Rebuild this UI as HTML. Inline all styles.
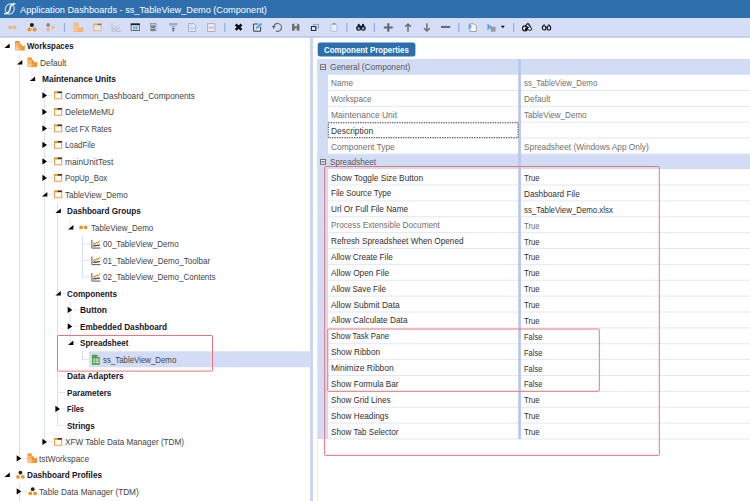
<!DOCTYPE html>
<html lang="en"><head><meta charset="utf-8"><title>Application Dashboards</title>
<style>
html,body{margin:0;padding:0}
body{width:750px;height:501px;overflow:hidden;background:#fff;position:relative;font-family:"Liberation Sans",sans-serif}
#a{position:absolute;left:0;top:0;width:750px;height:501px;overflow:hidden}
#a>div,#a>svg,#a>span{position:absolute;display:block}
#a>span{white-space:pre;line-height:12px;height:12px;transform-origin:0 50%}
</style></head>
<body><div id="a">
<svg id="g" width="750" height="501" viewBox="0 0 750 501">
<defs><linearGradient id="fg" x1="0" y1="0" x2="0" y2="1"><stop offset="0" stop-color="#f5861a"/><stop offset="0.35" stop-color="#f6983a"/><stop offset="1" stop-color="#f9b878"/></linearGradient></defs>
<rect x="0.00" y="0.00" width="750.00" height="18.00" fill="#2f6fad"/>
<rect x="0.00" y="18.00" width="750.00" height="19.00" fill="#d5def6"/>
<rect x="0.00" y="36.20" width="750.00" height="1.50" fill="#b7c4e5"/>
<rect x="310.20" y="37.70" width="2.70" height="464.00" fill="#c8d2f0"/>
<rect x="89.20" y="351.30" width="221.10" height="16.00" fill="#d3dcf5"/>
<rect x="19.00" y="54.40" width="1.00" height="405.00" fill="#dbe0f3"/>
<rect x="19.00" y="483.40" width="1.00" height="17.60" fill="#dbe0f3"/>
<rect x="31.50" y="70.90" width="1.00" height="6.00" fill="#dbe0f3"/>
<rect x="44.10" y="87.40" width="1.00" height="355.50" fill="#dbe0f3"/>
<rect x="57.00" y="202.90" width="1.00" height="223.50" fill="#dbe0f3"/>
<rect x="69.70" y="219.40" width="1.00" height="6.00" fill="#dbe0f3"/>
<rect x="82.00" y="235.90" width="1.00" height="42.00" fill="#dbe0f3"/>
<rect x="69.70" y="301.90" width="1.00" height="42.00" fill="#dbe0f3"/>
<rect x="82.00" y="351.40" width="1.00" height="9.00" fill="#dbe0f3"/>
<rect x="47.50" y="94.90" width="5.50" height="1.00" fill="#e1e5f5"/>
<rect x="47.50" y="111.40" width="5.50" height="1.00" fill="#e1e5f5"/>
<rect x="47.50" y="127.90" width="5.50" height="1.00" fill="#e1e5f5"/>
<rect x="47.50" y="144.40" width="5.50" height="1.00" fill="#e1e5f5"/>
<rect x="47.50" y="160.90" width="5.50" height="1.00" fill="#e1e5f5"/>
<rect x="47.50" y="177.40" width="5.50" height="1.00" fill="#e1e5f5"/>
<rect x="47.50" y="193.90" width="5.50" height="1.00" fill="#e1e5f5"/>
<rect x="47.50" y="441.40" width="5.50" height="1.00" fill="#e1e5f5"/>
<rect x="82.50" y="243.40" width="8.50" height="1.00" fill="#e1e5f5"/>
<rect x="82.50" y="259.90" width="8.50" height="1.00" fill="#e1e5f5"/>
<rect x="82.50" y="276.40" width="8.50" height="1.00" fill="#e1e5f5"/>
<rect x="82.50" y="358.90" width="8.50" height="1.00" fill="#e1e5f5"/>
<rect x="57.50" y="375.40" width="7.50" height="1.00" fill="#e1e5f5"/>
<rect x="57.50" y="391.90" width="7.50" height="1.00" fill="#e1e5f5"/>
<rect x="57.50" y="424.90" width="7.50" height="1.00" fill="#e1e5f5"/>
<rect x="61.00" y="408.40" width="4.00" height="1.00" fill="#e1e5f5"/>
<rect x="62.00" y="210.40" width="3.00" height="1.00" fill="#e1e5f5"/>
<rect x="62.00" y="292.90" width="3.00" height="1.00" fill="#e1e5f5"/>
<rect x="74.00" y="309.40" width="4.00" height="1.00" fill="#e1e5f5"/>
<rect x="74.00" y="325.90" width="4.00" height="1.00" fill="#e1e5f5"/>
<rect x="74.00" y="342.40" width="4.00" height="1.00" fill="#e1e5f5"/>
<rect x="22.00" y="457.90" width="5.00" height="1.00" fill="#e1e5f5"/>
<rect x="22.00" y="490.90" width="5.00" height="1.00" fill="#e1e5f5"/>
<svg x="4.30" y="43.50" overflow="visible" width="5.4" height="4.4" viewBox="0 0 5.4 4.4"><path d="M5.4 0V4.4H0Z" fill="#000"/></svg>
<svg x="14.90" y="40.80" overflow="visible" width="10" height="10" viewBox="0 0 10 10"><path d="M0.2 0.2H4.5V9.8H0.2Z" fill="url(#fg)"/><path d="M4.5 2L6.5 3.8L7.8 5.6L9.8 3.9V9.8H4.5Z" fill="#f6912a"/><path d="M1 2.4H3.4V3.4H1ZM1 4.4H3.4V5.4H1ZM1 6.4H3.4V8.8H1Z" fill="#fbd3a8"/><path d="M5.4 6.4H6.4V9H5.4Z" fill="#f9b878"/></svg>
<svg x="16.90" y="60.00" overflow="visible" width="5.4" height="4.4" viewBox="0 0 5.4 4.4"><path d="M5.4 0V4.4H0Z" fill="#000"/></svg>
<svg x="27.30" y="57.30" overflow="visible" width="10" height="10" viewBox="0 0 10 10"><path d="M0.2 0.2H4.5V9.8H0.2Z" fill="url(#fg)"/><path d="M4.5 2L6.5 3.8L7.8 5.6L9.8 3.9V9.8H4.5Z" fill="#f6912a"/><path d="M1 2.4H3.4V3.4H1ZM1 4.4H3.4V5.4H1ZM1 6.4H3.4V8.8H1Z" fill="#fbd3a8"/><path d="M5.4 6.4H6.4V9H5.4Z" fill="#f9b878"/></svg>
<svg x="29.70" y="76.50" overflow="visible" width="5.4" height="4.4" viewBox="0 0 5.4 4.4"><path d="M5.4 0V4.4H0Z" fill="#000"/></svg>
<svg x="42.40" y="92.30" overflow="visible" width="4.6" height="6.2" viewBox="0 0 4.6 6.2"><path d="M0 0L4.6 3.1L0 6.2Z" fill="#000"/></svg>
<svg x="54.00" y="91.40" overflow="visible" width="8.2" height="8" viewBox="0 0 8.2 8"><rect x="0.5" y="0.6" width="7.2" height="6.8" fill="#fff" stroke="#f29d45" stroke-width="1"/><rect x="0.2" y="0.2" width="7.8" height="1.7" fill="#ee9232"/><rect x="3.6" y="0.2" width="4.4" height="1.5" fill="#333"/></svg>
<svg x="42.40" y="108.80" overflow="visible" width="4.6" height="6.2" viewBox="0 0 4.6 6.2"><path d="M0 0L4.6 3.1L0 6.2Z" fill="#000"/></svg>
<svg x="54.00" y="107.90" overflow="visible" width="8.2" height="8" viewBox="0 0 8.2 8"><rect x="0.5" y="0.6" width="7.2" height="6.8" fill="#fff" stroke="#f29d45" stroke-width="1"/><rect x="0.2" y="0.2" width="7.8" height="1.7" fill="#ee9232"/><rect x="3.6" y="0.2" width="4.4" height="1.5" fill="#333"/></svg>
<svg x="42.40" y="125.30" overflow="visible" width="4.6" height="6.2" viewBox="0 0 4.6 6.2"><path d="M0 0L4.6 3.1L0 6.2Z" fill="#000"/></svg>
<svg x="54.00" y="124.40" overflow="visible" width="8.2" height="8" viewBox="0 0 8.2 8"><rect x="0.5" y="0.6" width="7.2" height="6.8" fill="#fff" stroke="#f29d45" stroke-width="1"/><rect x="0.2" y="0.2" width="7.8" height="1.7" fill="#ee9232"/><rect x="3.6" y="0.2" width="4.4" height="1.5" fill="#333"/></svg>
<svg x="42.40" y="141.80" overflow="visible" width="4.6" height="6.2" viewBox="0 0 4.6 6.2"><path d="M0 0L4.6 3.1L0 6.2Z" fill="#000"/></svg>
<svg x="54.00" y="140.90" overflow="visible" width="8.2" height="8" viewBox="0 0 8.2 8"><rect x="0.5" y="0.6" width="7.2" height="6.8" fill="#fff" stroke="#f29d45" stroke-width="1"/><rect x="0.2" y="0.2" width="7.8" height="1.7" fill="#ee9232"/><rect x="3.6" y="0.2" width="4.4" height="1.5" fill="#333"/></svg>
<svg x="42.40" y="158.30" overflow="visible" width="4.6" height="6.2" viewBox="0 0 4.6 6.2"><path d="M0 0L4.6 3.1L0 6.2Z" fill="#000"/></svg>
<svg x="54.00" y="157.40" overflow="visible" width="8.2" height="8" viewBox="0 0 8.2 8"><rect x="0.5" y="0.6" width="7.2" height="6.8" fill="#fff" stroke="#f29d45" stroke-width="1"/><rect x="0.2" y="0.2" width="7.8" height="1.7" fill="#ee9232"/><rect x="3.6" y="0.2" width="4.4" height="1.5" fill="#333"/></svg>
<svg x="42.40" y="174.80" overflow="visible" width="4.6" height="6.2" viewBox="0 0 4.6 6.2"><path d="M0 0L4.6 3.1L0 6.2Z" fill="#000"/></svg>
<svg x="54.00" y="173.90" overflow="visible" width="8.2" height="8" viewBox="0 0 8.2 8"><rect x="0.5" y="0.6" width="7.2" height="6.8" fill="#fff" stroke="#f29d45" stroke-width="1"/><rect x="0.2" y="0.2" width="7.8" height="1.7" fill="#ee9232"/><rect x="3.6" y="0.2" width="4.4" height="1.5" fill="#333"/></svg>
<svg x="41.90" y="192.00" overflow="visible" width="5.4" height="4.4" viewBox="0 0 5.4 4.4"><path d="M5.4 0V4.4H0Z" fill="#000"/></svg>
<svg x="54.00" y="190.40" overflow="visible" width="8.2" height="8" viewBox="0 0 8.2 8"><rect x="0.5" y="0.6" width="7.2" height="6.8" fill="#fff" stroke="#f29d45" stroke-width="1"/><rect x="0.2" y="0.2" width="7.8" height="1.7" fill="#ee9232"/><rect x="3.6" y="0.2" width="4.4" height="1.5" fill="#333"/></svg>
<svg x="55.40" y="208.50" overflow="visible" width="5.4" height="4.4" viewBox="0 0 5.4 4.4"><path d="M5.4 0V4.4H0Z" fill="#000"/></svg>
<svg x="68.00" y="225.00" overflow="visible" width="5.4" height="4.4" viewBox="0 0 5.4 4.4"><path d="M5.4 0V4.4H0Z" fill="#000"/></svg>
<svg x="79.00" y="225.20" overflow="visible" width="9" height="4.4" viewBox="0 0 9 4.4"><circle cx="2.1" cy="2.2" r="1.9" fill="#f0921e"/><circle cx="6.6" cy="2.2" r="1.9" fill="#f0921e"/></svg>
<svg x="91.30" y="239.70" overflow="visible" width="9.4" height="9.2" viewBox="0 0 9.4 9.2"><path d="M0.6 0.2V8.4H9.2" fill="none" stroke="#5a5a5a" stroke-width="1"/><path d="M1.6 4.4L3 3.4L4 4L5.6 2.6L6.6 3.2L8.6 1" fill="none" stroke="#f0921e" stroke-width="1.1"/><path d="M1.8 6.6L3.2 5.6L4.4 6.3L6 5.4L7 5.9L8.6 5" fill="none" stroke="#4a4a4a" stroke-width="1.2"/></svg>
<svg x="91.30" y="256.20" overflow="visible" width="9.4" height="9.2" viewBox="0 0 9.4 9.2"><path d="M0.6 0.2V8.4H9.2" fill="none" stroke="#5a5a5a" stroke-width="1"/><path d="M1.6 4.4L3 3.4L4 4L5.6 2.6L6.6 3.2L8.6 1" fill="none" stroke="#f0921e" stroke-width="1.1"/><path d="M1.8 6.6L3.2 5.6L4.4 6.3L6 5.4L7 5.9L8.6 5" fill="none" stroke="#4a4a4a" stroke-width="1.2"/></svg>
<svg x="91.30" y="272.70" overflow="visible" width="9.4" height="9.2" viewBox="0 0 9.4 9.2"><path d="M0.6 0.2V8.4H9.2" fill="none" stroke="#5a5a5a" stroke-width="1"/><path d="M1.6 4.4L3 3.4L4 4L5.6 2.6L6.6 3.2L8.6 1" fill="none" stroke="#f0921e" stroke-width="1.1"/><path d="M1.8 6.6L3.2 5.6L4.4 6.3L6 5.4L7 5.9L8.6 5" fill="none" stroke="#4a4a4a" stroke-width="1.2"/></svg>
<svg x="55.40" y="291.00" overflow="visible" width="5.4" height="4.4" viewBox="0 0 5.4 4.4"><path d="M5.4 0V4.4H0Z" fill="#000"/></svg>
<svg x="67.70" y="306.80" overflow="visible" width="4.6" height="6.2" viewBox="0 0 4.6 6.2"><path d="M0 0L4.6 3.1L0 6.2Z" fill="#000"/></svg>
<svg x="67.70" y="323.30" overflow="visible" width="4.6" height="6.2" viewBox="0 0 4.6 6.2"><path d="M0 0L4.6 3.1L0 6.2Z" fill="#000"/></svg>
<svg x="68.00" y="340.50" overflow="visible" width="5.4" height="4.4" viewBox="0 0 5.4 4.4"><path d="M5.4 0V4.4H0Z" fill="#000"/></svg>
<svg x="91.70" y="354.40" overflow="visible" width="8.4" height="10.6" viewBox="0 0 8.4 10.6"><path d="M0.3 0.3H5.6L8.1 2.8V10.3H0.3Z" fill="#4c9f4c"/><path d="M5.6 0.3V2.8H8.1Z" fill="#b9dcb9"/><rect x="1.4" y="4.2" width="5.6" height="4.4" fill="#e9f5e6"/><path d="M1.4 5.6H7M1.4 7.1H7M3.6 4.2V8.6" stroke="#4c9f4c" stroke-width="0.7"/></svg>
<svg x="55.40" y="405.80" overflow="visible" width="4.6" height="6.2" viewBox="0 0 4.6 6.2"><path d="M0 0L4.6 3.1L0 6.2Z" fill="#000"/></svg>
<svg x="42.40" y="438.80" overflow="visible" width="4.6" height="6.2" viewBox="0 0 4.6 6.2"><path d="M0 0L4.6 3.1L0 6.2Z" fill="#000"/></svg>
<svg x="54.00" y="437.90" overflow="visible" width="8.2" height="8" viewBox="0 0 8.2 8"><rect x="0.5" y="0.6" width="7.2" height="6.8" fill="#fff" stroke="#f29d45" stroke-width="1"/><rect x="0.2" y="0.2" width="7.8" height="1.7" fill="#ee9232"/><rect x="3.6" y="0.2" width="4.4" height="1.5" fill="#333"/></svg>
<svg x="16.70" y="455.30" overflow="visible" width="4.6" height="6.2" viewBox="0 0 4.6 6.2"><path d="M0 0L4.6 3.1L0 6.2Z" fill="#000"/></svg>
<svg x="27.20" y="453.30" overflow="visible" width="10" height="10" viewBox="0 0 10 10"><path d="M0.2 0.2H4.5V9.8H0.2Z" fill="url(#fg)"/><path d="M4.5 2L6.5 3.8L7.8 5.6L9.8 3.9V9.8H4.5Z" fill="#f6912a"/><path d="M1 2.4H3.4V3.4H1ZM1 4.4H3.4V5.4H1ZM1 6.4H3.4V8.8H1Z" fill="#fbd3a8"/><path d="M5.4 6.4H6.4V9H5.4Z" fill="#f9b878"/></svg>
<svg x="4.40" y="472.50" overflow="visible" width="5.4" height="4.4" viewBox="0 0 5.4 4.4"><path d="M5.4 0V4.4H0Z" fill="#000"/></svg>
<svg x="16.00" y="470.70" overflow="visible" width="8.8" height="8.4" viewBox="0 0 8.8 8.4"><circle cx="4.4" cy="2" r="1.9" fill="#222"/><circle cx="2" cy="6.2" r="1.9" fill="#f0921e"/><circle cx="6.8" cy="6.2" r="1.9" fill="#f0921e"/></svg>
<svg x="16.70" y="488.30" overflow="visible" width="4.6" height="6.2" viewBox="0 0 4.6 6.2"><path d="M0 0L4.6 3.1L0 6.2Z" fill="#000"/></svg>
<svg x="28.30" y="487.20" overflow="visible" width="8.8" height="8.4" viewBox="0 0 8.8 8.4"><circle cx="4.4" cy="2" r="1.9" fill="#222"/><circle cx="2" cy="6.2" r="1.9" fill="#f0921e"/><circle cx="6.8" cy="6.2" r="1.9" fill="#f0921e"/></svg>
<rect x="57.50" y="335.50" width="155.00" height="35.60" rx="0.7" fill="none" stroke="#ee747b" stroke-width="1"/>
<rect x="317.7" y="42.5" width="97.7" height="13.9" rx="2.5" fill="#2b6fae"/>
<rect x="317.20" y="59.00" width="432.80" height="15.80" fill="#d3dcf5"/>
<rect x="317.20" y="154.00" width="432.80" height="15.10" fill="#d3dcf5"/>
<rect x="317.20" y="59.00" width="10.80" height="380.00" fill="#d3dcf5"/>
<rect x="317.20" y="439.00" width="1.00" height="62.00" fill="#e3e8f8"/>
<rect x="328.00" y="89.90" width="422.00" height="1.00" fill="#e3e8f8"/>
<rect x="328.00" y="105.80" width="422.00" height="1.00" fill="#e3e8f8"/>
<rect x="328.00" y="121.70" width="422.00" height="1.00" fill="#e3e8f8"/>
<rect x="328.00" y="137.60" width="422.00" height="1.00" fill="#e3e8f8"/>
<rect x="328.00" y="153.50" width="422.00" height="1.00" fill="#e3e8f8"/>
<rect x="328.00" y="184.50" width="422.00" height="1.00" fill="#e3e8f8"/>
<rect x="328.00" y="200.38" width="422.00" height="1.00" fill="#e3e8f8"/>
<rect x="328.00" y="216.25" width="422.00" height="1.00" fill="#e3e8f8"/>
<rect x="328.00" y="232.12" width="422.00" height="1.00" fill="#e3e8f8"/>
<rect x="328.00" y="248.00" width="422.00" height="1.00" fill="#e3e8f8"/>
<rect x="328.00" y="263.88" width="422.00" height="1.00" fill="#e3e8f8"/>
<rect x="328.00" y="279.75" width="422.00" height="1.00" fill="#e3e8f8"/>
<rect x="328.00" y="295.62" width="422.00" height="1.00" fill="#e3e8f8"/>
<rect x="328.00" y="311.50" width="422.00" height="1.00" fill="#e3e8f8"/>
<rect x="328.00" y="327.38" width="422.00" height="1.00" fill="#e3e8f8"/>
<rect x="328.00" y="343.25" width="422.00" height="1.00" fill="#e3e8f8"/>
<rect x="328.00" y="359.12" width="422.00" height="1.00" fill="#e3e8f8"/>
<rect x="328.00" y="375.00" width="422.00" height="1.00" fill="#e3e8f8"/>
<rect x="328.00" y="390.88" width="422.00" height="1.00" fill="#e3e8f8"/>
<rect x="328.00" y="406.75" width="422.00" height="1.00" fill="#e3e8f8"/>
<rect x="328.00" y="422.62" width="422.00" height="1.00" fill="#e3e8f8"/>
<rect x="328.00" y="438.50" width="422.00" height="1.00" fill="#e3e8f8"/>
<rect x="518.20" y="59.00" width="2.70" height="380.00" fill="#b9c7ea"/>
<svg x="320.1" y="64.20" overflow="visible" width="6" height="6" viewBox="0 0 6 6"><rect x="0.5" y="0.5" width="4.9" height="4.9" fill="#f4f6fd" stroke="#5e5e5e" stroke-width="0.9"/><path d="M1.5 2.95H4.4" stroke="#222" stroke-width="0.9"/></svg>
<svg x="320.1" y="158.90" overflow="visible" width="6" height="6" viewBox="0 0 6 6"><rect x="0.5" y="0.5" width="4.9" height="4.9" fill="#f4f6fd" stroke="#5e5e5e" stroke-width="0.9"/><path d="M1.5 2.95H4.4" stroke="#222" stroke-width="0.9"/></svg>
<svg x="327.8" y="122.30" overflow="visible" width="190.80" height="15.90" viewBox="0 0 190.80 15.90"><rect x="0.5" y="0.5" width="189.80" height="14.90" fill="none" stroke="#3a3a3a" stroke-width="1" stroke-dasharray="1.25 1.2"/></svg>
<rect x="324.60" y="166.50" width="334.70" height="288.90" rx="0.7" fill="none" stroke="#ee747b" stroke-width="1"/>
<rect x="327.80" y="329.00" width="271.50" height="62.30" rx="0.7" fill="none" stroke="#ee747b" stroke-width="1"/>
<rect x="63.90" y="23.20" width="1.20" height="8.60" fill="#93abdd"/>
<rect x="224.20" y="23.20" width="1.20" height="8.60" fill="#93abdd"/>
<rect x="346.20" y="23.20" width="1.20" height="8.60" fill="#93abdd"/>
<rect x="373.80" y="23.20" width="1.20" height="8.60" fill="#93abdd"/>
<rect x="458.20" y="23.20" width="1.20" height="8.60" fill="#93abdd"/>
<rect x="513.00" y="23.20" width="1.20" height="8.60" fill="#93abdd"/>
<svg x="8.20" y="25.20" overflow="visible" width="9" height="4.4" viewBox="0 0 9 4.4"><circle cx="2.1" cy="2.2" r="1.9" fill="#f6b469"/><circle cx="6.3" cy="2.2" r="1.9" fill="#f6b469"/></svg>
<svg x="27.20" y="22.80" overflow="visible" width="9.6" height="9" viewBox="0 0 9.6 9"><circle cx="4.7" cy="2.1" r="2" fill="#1a1a1a"/><circle cx="2.2" cy="6.6" r="2" fill="#f0921e"/><circle cx="7.4" cy="6.6" r="2" fill="#f0921e"/></svg>
<svg x="46.20" y="22.80" overflow="visible" width="9.6" height="9" viewBox="0 0 9.6 9"><circle cx="2" cy="2.2" r="1.9" fill="#8a8a8a"/><circle cx="2" cy="6.8" r="1.9" fill="#f6b469"/><path d="M6.8 2.6V6.4M4.9 4.5H8.7" stroke="#f6b469" stroke-width="1.3"/></svg>
<svg x="73.20" y="22.20" overflow="visible" width="10.4" height="10" viewBox="0 0 10.4 10"><path d="M0.3 0.3H5.2V4.2L7 6L8.6 4.4L10.2 6V9.8H0.3Z" fill="#f5b273"/><path d="M1.2 1.2H2.4V2.4H1.2ZM3.2 1.2H4.4V2.4H3.2ZM1.4 3.4H2.4V9H1.4ZM3.4 4.4H4.4V9H3.4Z" fill="#fbd6ad"/></svg>
<svg x="93.20" y="23.50" overflow="visible" width="8.8" height="8" viewBox="0 0 8.8 8"><rect x="0.6" y="0.8" width="7.4" height="6.4" fill="#e3e8f8" stroke="#f3b56f" stroke-width="1.1"/><rect x="0.2" y="0.2" width="8.2" height="1.6" fill="#f0a85a"/><rect x="4.4" y="0.2" width="3.6" height="1.4" fill="#777"/></svg>
<svg x="111.50" y="23.00" overflow="visible" width="9.6" height="9" viewBox="0 0 9.6 9"><path d="M0.5 0.3V8.2H9.2" fill="none" stroke="#b0b5c6" stroke-width="0.9"/><path d="M1.3 4.6L3.2 3.2L5 4.2L8.4 1.2" fill="none" stroke="#f3bd85" stroke-width="1"/><path d="M1.3 6.6L3.2 5.6L5 6.4L8.4 4.4" fill="none" stroke="#a9b0c6" stroke-width="0.9"/></svg>
<svg x="130.70" y="23.40" overflow="visible" width="9.2" height="7.6" viewBox="0 0 9.2 7.6"><rect x="0.5" y="0.5" width="8.2" height="6.6" fill="#eef2fc" stroke="#6a6a6a" stroke-width="1"/><rect x="0.1" y="0.1" width="9" height="1.7" fill="#1e1e1e"/><rect x="2.2" y="2.8" width="4.8" height="3.4" fill="#6aa9e6"/><path d="M4.6 2.8V6.2" stroke="#dfe9fb" stroke-width="0.6"/></svg>
<svg x="150.20" y="22.80" overflow="visible" width="8" height="9" viewBox="0 0 8 9"><rect x="0.3" y="0.5" width="5" height="2.2" fill="#c9ccd4" stroke="#777" stroke-width="0.6"/><rect x="0.3" y="3.3" width="5" height="2.2" fill="#777"/><rect x="0.3" y="6.1" width="5" height="2.2" fill="#777"/><path d="M6.6 0.6V8.4" stroke="#7fb0ea" stroke-width="1" stroke-dasharray="1.3 0.9"/></svg>
<svg x="168.90" y="22.80" overflow="visible" width="8.8" height="9.2" viewBox="0 0 8.8 9.2"><path d="M0.2 0.3H8.6V2.2L7.6 2.6H1.2L0.2 2.2Z" fill="#aaacb4"/><path d="M2 3.5H6.8L6.2 4.8H2.6Z" fill="#79b2ec"/><path d="M3.1 5.3H5.7V6.6H5.2V8.6H3.6V6.6H3.1Z" fill="#74767c"/></svg>
<svg x="188.00" y="23.00" overflow="visible" width="8.2" height="9" viewBox="0 0 8.2 9"><path d="M0.5 0.5H5.4L7.7 2.8V8.5H0.5Z" fill="#eaf0fc" stroke="#a4a9ba" stroke-width="0.9"/><path d="M1.8 2H4.4" stroke="#8fc0ee" stroke-width="0.8"/><path d="M1.6 3.8H6.6V7H1.6Z" fill="#bcd9f4"/></svg>
<svg x="207.20" y="23.00" overflow="visible" width="8.2" height="9" viewBox="0 0 8.2 9"><rect x="0.5" y="0.7" width="7.2" height="7.8" fill="#eef1fb" stroke="#a4a6b2" stroke-width="0.9"/><rect x="1.9" y="3.6" width="2" height="2" fill="#f3b06a"/><rect x="4.2" y="3.6" width="2" height="2" fill="#86bdf0"/><path d="M7.6 2V7" stroke="#f0b4c0" stroke-width="0.6"/></svg>
<svg x="234.40" y="23.40" overflow="visible" width="8.4" height="7.6" viewBox="0 0 8.4 7.6"><path d="M1.3 1.1L7.1 6.5M7.1 1.1L1.3 6.5" stroke="#0c0c0c" stroke-width="2.5"/></svg>
<svg x="252.80" y="22.40" overflow="visible" width="9.6" height="9.6" viewBox="0 0 9.6 9.6"><path d="M5 1.6H0.8V8.8H7.8V4.4" fill="#e4e9f9" stroke="#3c3c3c" stroke-width="1"/><path d="M2.8 6.6L3.4 4.6L7.6 0.4L9.2 2L5 6Z" fill="#4fa6ea"/></svg>
<svg x="271.60" y="22.60" overflow="visible" width="10.8" height="9.6" viewBox="0 0 10.8 9.6"><path d="M2 4.9A4 4 0 1 1 4.4 8.5" fill="none" stroke="#6c6c6c" stroke-width="1.15"/><path d="M0.2 3.4L2.2 6.4L4.2 3.2Z" fill="#6c6c6c"/></svg>
<svg x="291.90" y="23.70" overflow="visible" width="7.8" height="7.2" viewBox="0 0 7.8 7.2"><path d="M0.1 0.1H6.4L7.6 1.3V7.1H0.1Z" fill="#6f6f6f"/><rect x="2.5" y="0" width="2.6" height="2.5" fill="#d5def6"/><rect x="2.8" y="4.8" width="2.1" height="2.5" fill="#d5def6"/></svg>
<svg x="310.80" y="23.80" overflow="visible" width="8.2" height="7.4" viewBox="0 0 8.2 7.4"><rect x="2.8" y="0.6" width="4.8" height="3.6" fill="none" stroke="#6da5e0" stroke-width="0.9"/><rect x="0.6" y="2.8" width="4.4" height="3.8" fill="#eef1fb" stroke="#2a2a2a" stroke-width="1.1"/></svg>
<svg x="330.40" y="22.80" overflow="visible" width="7.2" height="9.2" viewBox="0 0 7.2 9.2"><rect x="0.6" y="1.4" width="6" height="7.3" rx="0.8" fill="#e6edfb" stroke="#9cc4ec" stroke-width="0.9"/><rect x="2" y="0.2" width="3.2" height="1.8" rx="0.6" fill="#9a9a9a"/></svg>
<svg x="356.00" y="23.20" overflow="visible" width="9.8" height="7.8" viewBox="0 0 9.8 7.8"><path d="M1.6 1.6Q2.6 0 3.8 1V3.4H1.6ZM6 1Q7.2 0 8.2 1.6V3.4H6Z" fill="#1c1c1c"/><circle cx="2.6" cy="5.1" r="2.5" fill="#1c1c1c"/><circle cx="7.2" cy="5.1" r="2.5" fill="#1c1c1c"/><rect x="3.8" y="2.4" width="2.2" height="2.4" fill="#1c1c1c"/><circle cx="2.7" cy="5.4" r="1.25" fill="#6fb6ee"/><circle cx="7.1" cy="5.4" r="1.25" fill="#6fb6ee"/></svg>
<svg x="383.80" y="23.00" overflow="visible" width="9" height="9" viewBox="0 0 9 9"><path d="M4.5 0.2V8.8M0.1 4.5H8.9" stroke="#666" stroke-width="2.1"/></svg>
<svg x="404.60" y="23.00" overflow="visible" width="6.8" height="9" viewBox="0 0 6.8 9"><path d="M3.4 1.2V8.8" stroke="#6c6c6c" stroke-width="1.5"/><path d="M0.6 3.8L3.4 1L6.2 3.8" fill="none" stroke="#6c6c6c" stroke-width="1.5"/></svg>
<svg x="423.50" y="23.00" overflow="visible" width="6.8" height="9" viewBox="0 0 6.8 9"><path d="M3.4 0.2V7.8" stroke="#6c6c6c" stroke-width="1.5"/><path d="M0.6 5.2L3.4 8L6.2 5.2" fill="none" stroke="#6c6c6c" stroke-width="1.5"/></svg>
<svg x="441.00" y="25.90" overflow="visible" width="9.2" height="2.2" viewBox="0 0 9.2 2.2"><rect x="0" y="0" width="9.2" height="2.1" fill="#6c6c6c"/></svg>
<svg x="468.40" y="23.00" overflow="visible" width="8.6" height="9" viewBox="0 0 8.6 9"><path d="M1.6 0.8H5.6L8 3.2V8.5H1.6Z" fill="#f4f6fd" stroke="#9a9a9a" stroke-width="0.9"/><path d="M0.2 0.2L3.6 3.4L0.2 6.6Z" fill="#63aae8"/></svg>
<svg x="487.20" y="23.40" overflow="visible" width="9" height="8.4" viewBox="0 0 9 8.4"><rect x="3.7" y="3.4" width="4.6" height="4.8" fill="#8d8d8d"/><path d="M4.6 4.6H7.4M4.6 5.8H7.4M4.6 7H7.4" stroke="#bdbdbd" stroke-width="0.5"/><path d="M0.2 0.2L4.8 3.5L0.2 6.8Z" fill="#5aa5e8"/></svg>
<svg x="500.80" y="25.80" overflow="visible" width="4" height="2.6" viewBox="0 0 4 2.6"><path d="M0 0H4L2 2.5Z" fill="#0c0c0c"/></svg>
<svg x="522.00" y="22.80" overflow="visible" width="10.4" height="8.8" viewBox="0 0 10.4 8.8"><path d="M4.4 1.4C5.4 0 7 0.4 7.4 1.8L9.8 6.6C9 7.8 7 7.8 6.2 6.8" fill="#f2f4fb" stroke="#111" stroke-width="1"/><circle cx="3" cy="5.6" r="2.5" fill="#f2f4fb" stroke="#111" stroke-width="1.1"/><circle cx="5.4" cy="3.4" r="1.9" fill="none" stroke="#111" stroke-width="0.9"/><circle cx="4" cy="6.6" r="1.3" fill="#111"/></svg>
<svg x="541.60" y="24.20" overflow="visible" width="10" height="6.6" viewBox="0 0 10 6.6"><ellipse cx="2.5" cy="3.7" rx="1.8" ry="2.1" fill="none" stroke="#111" stroke-width="1.1"/><ellipse cx="7.3" cy="3.7" rx="1.8" ry="2.1" fill="none" stroke="#111" stroke-width="1.1"/><path d="M4.2 3.2H5.6M1.2 2L2.2 0.5H3M8.6 2L7.6 0.5H6.8" fill="none" stroke="#111" stroke-width="0.9"/></svg>
<svg x="3.40" y="2.20" overflow="visible" width="13" height="13.4" viewBox="0 0 13 13.4"><ellipse cx="6.4" cy="6.8" rx="4.4" ry="5.2" fill="none" stroke="#c3d4ec" stroke-width="1.2" transform="rotate(20 6.4 6.8)"/><path d="M12 1.6C8.4 1.2 7 3.6 6.6 6.6C6.2 9.6 4.6 11.6 0.8 11.6" fill="none" stroke="#fff" stroke-width="1.5"/></svg>
</svg>
<span style="left:20.10px;top:3.70px;font-size:9.9px;font-weight:400;color:#fff;transform:scaleX(0.9300)">Application Dashboards - ss_TableView_Demo (Component)</span>
<span style="left:27.00px;top:40.20px;font-size:8.8px;font-weight:700;color:#15151f;transform:scaleX(0.9018)">Workspaces</span>
<span style="left:39.60px;top:56.90px;font-size:8.8px;font-weight:400;color:#444;transform:scaleX(0.9471)">Default</span>
<span style="left:42.00px;top:73.20px;font-size:8.8px;font-weight:700;color:#15151f;transform:scaleX(0.9520)">Maintenance Units</span>
<span style="left:65.00px;top:89.90px;font-size:8.8px;font-weight:400;color:#444;transform:scaleX(0.9394)">Common_Dashboard_Components</span>
<span style="left:65.00px;top:106.40px;font-size:8.8px;font-weight:400;color:#444;transform:scaleX(0.9544)">DeleteMeMU</span>
<span style="left:65.00px;top:122.90px;font-size:8.8px;font-weight:400;color:#444;transform:scaleX(0.8743)">Get FX Rates</span>
<span style="left:65.00px;top:139.40px;font-size:8.8px;font-weight:400;color:#444;transform:scaleX(0.8889)">LoadFile</span>
<span style="left:65.00px;top:155.90px;font-size:8.8px;font-weight:400;color:#444;transform:scaleX(0.9497)">mainUnitTest</span>
<span style="left:65.00px;top:172.40px;font-size:8.8px;font-weight:400;color:#444;transform:scaleX(0.9009)">PopUp_Box</span>
<span style="left:65.00px;top:188.90px;font-size:8.8px;font-weight:400;color:#444;transform:scaleX(0.9181)">TableView_Demo</span>
<span style="left:67.30px;top:205.20px;font-size:8.8px;font-weight:700;color:#15151f;transform:scaleX(0.9250)">Dashboard Groups</span>
<span style="left:90.70px;top:221.90px;font-size:8.8px;font-weight:400;color:#444;transform:scaleX(0.9122)">TableView_Demo</span>
<span style="left:102.70px;top:238.40px;font-size:8.8px;font-weight:400;color:#444;transform:scaleX(0.9110)">00_TableView_Demo</span>
<span style="left:102.70px;top:254.90px;font-size:8.8px;font-weight:400;color:#444;transform:scaleX(0.9193)">01_TableView_Demo_Toolbar</span>
<span style="left:102.70px;top:271.40px;font-size:8.8px;font-weight:400;color:#444;transform:scaleX(0.9149)">02_TableView_Demo_Contents</span>
<span style="left:67.30px;top:287.70px;font-size:8.8px;font-weight:700;color:#15151f;transform:scaleX(0.9300)">Components</span>
<span style="left:80.30px;top:304.20px;font-size:8.8px;font-weight:700;color:#15151f;transform:scaleX(0.9526)">Button</span>
<span style="left:80.30px;top:320.70px;font-size:8.8px;font-weight:700;color:#15151f;transform:scaleX(0.9317)">Embedded Dashboard</span>
<span style="left:80.30px;top:337.20px;font-size:8.8px;font-weight:700;color:#15151f;transform:scaleX(0.9164)">Spreadsheet</span>
<span style="left:102.70px;top:353.90px;font-size:8.8px;font-weight:400;color:#444;transform:scaleX(0.8939)">ss_TableView_Demo</span>
<span style="left:67.30px;top:370.20px;font-size:8.8px;font-weight:700;color:#15151f;transform:scaleX(0.9557)">Data Adapters</span>
<span style="left:67.30px;top:386.70px;font-size:8.8px;font-weight:700;color:#15151f;transform:scaleX(0.9262)">Parameters</span>
<span style="left:67.30px;top:403.20px;font-size:8.8px;font-weight:700;color:#15151f;transform:scaleX(0.8480)">Files</span>
<span style="left:67.30px;top:419.70px;font-size:8.8px;font-weight:700;color:#15151f;transform:scaleX(0.9138)">Strings</span>
<span style="left:65.00px;top:436.40px;font-size:8.8px;font-weight:400;color:#444;transform:scaleX(0.9267)">XFW Table Data Manager (TDM)</span>
<span style="left:39.30px;top:452.90px;font-size:8.8px;font-weight:400;color:#444;transform:scaleX(0.9412)">tstWorkspace</span>
<span style="left:26.70px;top:469.20px;font-size:8.8px;font-weight:700;color:#15151f;transform:scaleX(0.9297)">Dashboard Profiles</span>
<span style="left:39.30px;top:485.90px;font-size:8.8px;font-weight:400;color:#444;transform:scaleX(0.9355)">Table Data Manager (TDM)</span>
<span style="left:324.00px;top:43.50px;font-size:9.3px;font-weight:700;color:#fff;transform:scaleX(0.8461)">Component Properties</span>
<span style="left:330.00px;top:60.80px;font-size:8.8px;font-weight:400;color:#555;transform:scaleX(0.9438)">General (Component)</span>
<span style="left:330.00px;top:155.50px;font-size:8.8px;font-weight:400;color:#555;transform:scaleX(0.9220)">Spreadsheet</span>
<span style="left:331.20px;top:77.00px;font-size:8.8px;font-weight:400;color:#707070;transform:scaleX(0.9417)">Name</span>
<span style="left:524.30px;top:77.10px;font-size:8.8px;font-weight:400;color:#707070;transform:scaleX(0.8939)">ss_TableView_Demo</span>
<span style="left:331.20px;top:92.90px;font-size:8.8px;font-weight:400;color:#707070;transform:scaleX(0.9237)">Workspace</span>
<span style="left:524.30px;top:93.00px;font-size:8.8px;font-weight:400;color:#707070;transform:scaleX(0.9471)">Default</span>
<span style="left:331.20px;top:108.80px;font-size:8.8px;font-weight:400;color:#707070;transform:scaleX(0.9654)">Maintenance Unit</span>
<span style="left:524.30px;top:108.90px;font-size:8.8px;font-weight:400;color:#707070;transform:scaleX(0.9166)">TableView_Demo</span>
<span style="left:331.20px;top:124.70px;font-size:8.8px;font-weight:400;color:#303030;transform:scaleX(0.9565)">Description</span>
<span style="left:331.20px;top:140.60px;font-size:8.8px;font-weight:400;color:#707070;transform:scaleX(0.9545)">Component Type</span>
<span style="left:524.30px;top:140.70px;font-size:8.8px;font-weight:400;color:#707070;transform:scaleX(0.9445)">Spreadsheet (Windows App Only)</span>
<span style="left:331.20px;top:171.60px;font-size:8.8px;font-weight:400;color:#303030;transform:scaleX(0.9431)">Show Toggle Size Button</span>
<span style="left:524.30px;top:172.10px;font-size:8.8px;font-weight:400;color:#303030;transform:scaleX(0.8837)">True</span>
<span style="left:331.20px;top:187.47px;font-size:8.8px;font-weight:400;color:#303030;transform:scaleX(0.9126)">File Source Type</span>
<span style="left:524.30px;top:187.97px;font-size:8.8px;font-weight:400;color:#303030;transform:scaleX(0.9337)">Dashboard File</span>
<span style="left:331.20px;top:203.35px;font-size:8.8px;font-weight:400;color:#303030;transform:scaleX(0.9333)">Url Or Full File Name</span>
<span style="left:524.30px;top:203.85px;font-size:8.8px;font-weight:400;color:#303030;transform:scaleX(0.8926)">ss_TableView_Demo.xlsx</span>
<span style="left:331.20px;top:219.22px;font-size:8.8px;font-weight:400;color:#707070;transform:scaleX(0.9271)">Process Extensible Document</span>
<span style="left:524.30px;top:219.72px;font-size:8.8px;font-weight:400;color:#707070;transform:scaleX(0.8837)">True</span>
<span style="left:331.20px;top:235.10px;font-size:8.8px;font-weight:400;color:#303030;transform:scaleX(0.9310)">Refresh Spreadsheet When Opened</span>
<span style="left:524.30px;top:235.60px;font-size:8.8px;font-weight:400;color:#303030;transform:scaleX(0.8837)">True</span>
<span style="left:331.20px;top:250.98px;font-size:8.8px;font-weight:400;color:#303030;transform:scaleX(0.9293)">Allow Create File</span>
<span style="left:524.30px;top:251.48px;font-size:8.8px;font-weight:400;color:#303030;transform:scaleX(0.8837)">True</span>
<span style="left:331.20px;top:266.85px;font-size:8.8px;font-weight:400;color:#303030;transform:scaleX(0.9430)">Allow Open File</span>
<span style="left:524.30px;top:267.35px;font-size:8.8px;font-weight:400;color:#303030;transform:scaleX(0.8837)">True</span>
<span style="left:331.20px;top:282.73px;font-size:8.8px;font-weight:400;color:#303030;transform:scaleX(0.9162)">Allow Save File</span>
<span style="left:524.30px;top:283.23px;font-size:8.8px;font-weight:400;color:#303030;transform:scaleX(0.8837)">True</span>
<span style="left:331.20px;top:298.60px;font-size:8.8px;font-weight:400;color:#303030;transform:scaleX(0.9572)">Allow Submit Data</span>
<span style="left:524.30px;top:299.10px;font-size:8.8px;font-weight:400;color:#303030;transform:scaleX(0.8837)">True</span>
<span style="left:331.20px;top:314.48px;font-size:8.8px;font-weight:400;color:#303030;transform:scaleX(0.9424)">Allow Calculate Data</span>
<span style="left:524.30px;top:314.98px;font-size:8.8px;font-weight:400;color:#303030;transform:scaleX(0.8837)">True</span>
<span style="left:331.20px;top:330.35px;font-size:8.8px;font-weight:400;color:#303030;transform:scaleX(0.8887)">Show Task Pane</span>
<span style="left:524.30px;top:330.85px;font-size:8.8px;font-weight:400;color:#303030;transform:scaleX(0.8505)">False</span>
<span style="left:331.20px;top:346.23px;font-size:8.8px;font-weight:400;color:#303030;transform:scaleX(0.9383)">Show Ribbon</span>
<span style="left:524.30px;top:346.73px;font-size:8.8px;font-weight:400;color:#303030;transform:scaleX(0.8505)">False</span>
<span style="left:331.20px;top:362.10px;font-size:8.8px;font-weight:400;color:#303030;transform:scaleX(0.9657)">Minimize Ribbon</span>
<span style="left:524.30px;top:362.60px;font-size:8.8px;font-weight:400;color:#303030;transform:scaleX(0.8505)">False</span>
<span style="left:331.20px;top:377.98px;font-size:8.8px;font-weight:400;color:#303030;transform:scaleX(0.9264)">Show Formula Bar</span>
<span style="left:524.30px;top:378.48px;font-size:8.8px;font-weight:400;color:#303030;transform:scaleX(0.8505)">False</span>
<span style="left:331.20px;top:393.85px;font-size:8.8px;font-weight:400;color:#303030;transform:scaleX(0.9218)">Show Grid Lines</span>
<span style="left:524.30px;top:394.35px;font-size:8.8px;font-weight:400;color:#303030;transform:scaleX(0.8837)">True</span>
<span style="left:331.20px;top:409.73px;font-size:8.8px;font-weight:400;color:#303030;transform:scaleX(0.9331)">Show Headings</span>
<span style="left:524.30px;top:410.23px;font-size:8.8px;font-weight:400;color:#303030;transform:scaleX(0.8837)">True</span>
<span style="left:331.20px;top:425.60px;font-size:8.8px;font-weight:400;color:#303030;transform:scaleX(0.9221)">Show Tab Selector</span>
<span style="left:524.30px;top:426.10px;font-size:8.8px;font-weight:400;color:#303030;transform:scaleX(0.8837)">True</span>
</div></body></html>
